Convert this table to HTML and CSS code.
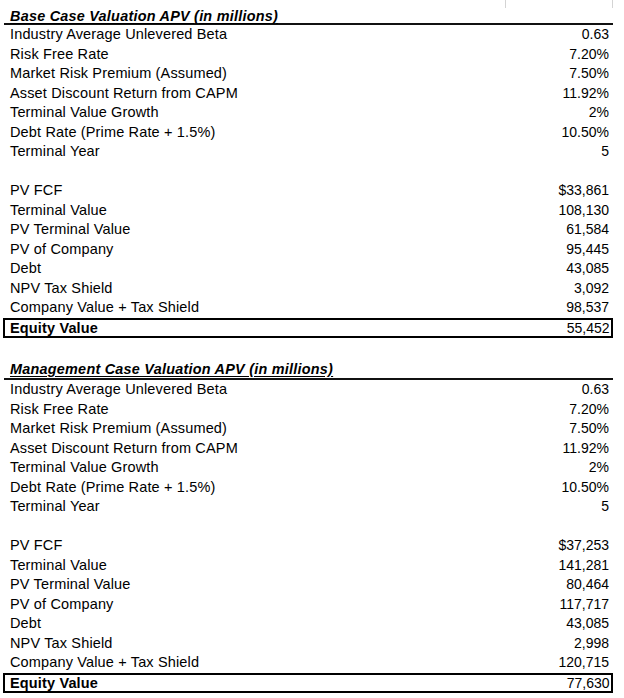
FILE: index.html
```html
<!DOCTYPE html>
<html>
<head>
<meta charset="utf-8">
<link rel="stylesheet" href="styles.css">
</head>
<body>
<div class="sheet">
  <div class="ticks"><span class="tick-col"></span></div>

  <section class="block">
    <div class="title"><span>Base Case Valuation APV (in millions)</span></div>
    <div class="row"><span class="lbl">Industry Average Unlevered Beta</span><span class="val">0.63</span></div>
    <div class="row"><span class="lbl">Risk Free Rate</span><span class="val">7.20%</span></div>
    <div class="row"><span class="lbl">Market Risk Premium (Assumed)</span><span class="val">7.50%</span></div>
    <div class="row"><span class="lbl">Asset Discount Return from CAPM</span><span class="val">11.92%</span></div>
    <div class="row"><span class="lbl">Terminal Value Growth</span><span class="val">2%</span></div>
    <div class="row"><span class="lbl">Debt Rate (Prime Rate + 1.5%)</span><span class="val">10.50%</span></div>
    <div class="row"><span class="lbl">Terminal Year</span><span class="val">5</span></div>
    <div class="row"></div>
    <div class="row"><span class="lbl">PV FCF</span><span class="val">$33,861</span></div>
    <div class="row"><span class="lbl">Terminal Value</span><span class="val">108,130</span></div>
    <div class="row"><span class="lbl">PV Terminal Value</span><span class="val">61,584</span></div>
    <div class="row"><span class="lbl">PV of Company</span><span class="val">95,445</span></div>
    <div class="row"><span class="lbl">Debt</span><span class="val">43,085</span></div>
    <div class="row"><span class="lbl">NPV Tax Shield</span><span class="val">3,092</span></div>
    <div class="row"><span class="lbl">Company Value + Tax Shield</span><span class="val">98,537</span></div>
    <div class="total"><span class="lbl">Equity Value</span><span class="val">55,452</span></div>
  </section>

  <div class="row"></div>

  <section class="block">
    <div class="title second"><span>Management Case Valuation APV (in millions)</span></div>
    <div class="row"><span class="lbl">Industry Average Unlevered Beta</span><span class="val">0.63</span></div>
    <div class="row"><span class="lbl">Risk Free Rate</span><span class="val">7.20%</span></div>
    <div class="row"><span class="lbl">Market Risk Premium (Assumed)</span><span class="val">7.50%</span></div>
    <div class="row"><span class="lbl">Asset Discount Return from CAPM</span><span class="val">11.92%</span></div>
    <div class="row"><span class="lbl">Terminal Value Growth</span><span class="val">2%</span></div>
    <div class="row"><span class="lbl">Debt Rate (Prime Rate + 1.5%)</span><span class="val">10.50%</span></div>
    <div class="row"><span class="lbl">Terminal Year</span><span class="val">5</span></div>
    <div class="row"></div>
    <div class="row"><span class="lbl">PV FCF</span><span class="val">$37,253</span></div>
    <div class="row"><span class="lbl">Terminal Value</span><span class="val">141,281</span></div>
    <div class="row"><span class="lbl">PV Terminal Value</span><span class="val">80,464</span></div>
    <div class="row"><span class="lbl">PV of Company</span><span class="val">117,717</span></div>
    <div class="row"><span class="lbl">Debt</span><span class="val">43,085</span></div>
    <div class="row"><span class="lbl">NPV Tax Shield</span><span class="val">2,998</span></div>
    <div class="row"><span class="lbl">Company Value + Tax Shield</span><span class="val">120,715</span></div>
    <div class="total"><span class="lbl">Equity Value</span><span class="val">77,630</span></div>
  </section>
</div>
</body>
</html>
```

FILE: styles.css
```css
html, body {
  margin: 0;
  padding: 0;
  background: #ffffff;
}

.sheet {
  width: 613px;
  font-family: "Liberation Sans", Arial, sans-serif;
  font-size: 14px;
  color: #000000;
}

.ticks {
  height: 8px;
  display: flex;
  justify-content: flex-end;
}

.tick-col {
  width: 106px;
  border-left: 1px solid #d4d4d4;
  border-right: 1px solid #d4d4d4;
}

.block {
  display: flex;
  flex-direction: column;
}

.title {
  margin-left: 4px;
  padding-left: 6px;
  height: 15px;
  line-height: 16px;
  border-bottom: 2px solid #111111;
  font-weight: bold;
  font-style: italic;
  font-size: 14.4px;
  letter-spacing: 0.25px;
  white-space: nowrap;
}

.title span {
  text-decoration: underline;
  text-underline-offset: 2px;
}

.title.second {
  height: 21px;
  line-height: 25px;
}

.row {
  height: 19.5px;
  line-height: 19.5px;
  display: flex;
  justify-content: space-between;
  padding-left: 10px;
  padding-right: 4px;
  white-space: nowrap;
}

.lbl {
  font-size: 14.5px;
  letter-spacing: 0.15px;
}

.val {
  text-align: right;
}

.total {
  margin-left: 3px;
  height: 16px;
  line-height: 16px;
  border: 2px solid #000000;
  border-right-width: 2.5px;
  display: flex;
  justify-content: space-between;
  padding-left: 5px;
  padding-right: 1.5px;
  font-weight: bold;
  white-space: nowrap;
}

.total .val {
  font-weight: normal;
}
```
